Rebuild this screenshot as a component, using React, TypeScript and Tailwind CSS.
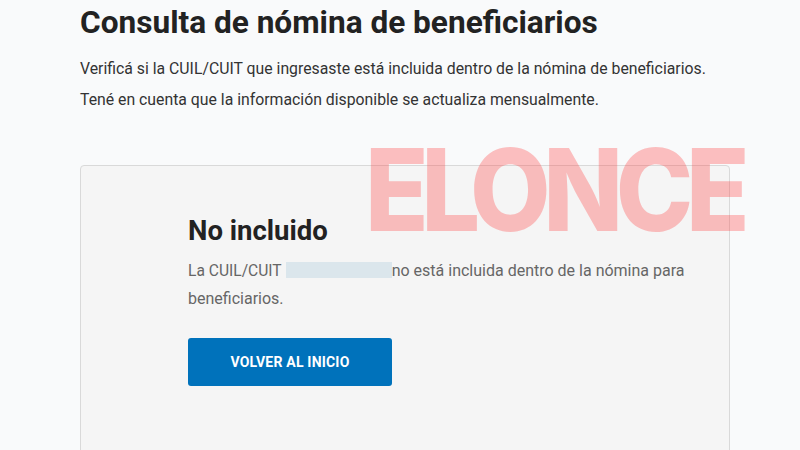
export default function App() {
	return (
		<div className="relative w-[800px] h-[450px] overflow-hidden bg-[#f9fafb] font-['Roboto',sans-serif]">
			<div className="pl-20 pt-[4px]">
				{/* Header */}
				<h1 className="text-[31.6px] leading-[38px] font-bold text-[#222]">
					Consulta de nómina de beneficiarios
				</h1>
				<p className="mt-[17px] text-[15.8px] leading-[20px] text-[#333]">
					Verificá si la CUIL/CUIT que ingresaste está incluida dentro de la nómina de beneficiarios.
				</p>
				<p className="mt-[11px] text-[15.8px] leading-[20px] text-[#333]">
					Tené en cuenta que la información disponible se actualiza mensualmente.
				</p>

				{/* Result card */}
				<div className="mt-[55px] w-[650px] h-[320px] rounded-t-[4px] border border-[#d9d9d9] bg-[#f5f5f5] pl-[107px] pt-[47px]">
					<h2 className="text-[27.5px] leading-[35px] font-bold text-[#222]">No incluido</h2>
					<p className="mt-[9px] w-[510px] text-[16px] leading-[27px] text-[#666]">
						<span className="text-[15.6px]">La CUIL/CUIT</span>
						<span className="inline-block ml-[4px] w-[106px] h-[16px] align-[-2px] bg-[#dbe6ec]" />
						<span>no está incluida dentro de la nómina para beneficiarios.</span>
					</p>
					<button className="mt-[26px] w-[204px] h-[48px] rounded-[3px] bg-[#0072bb] text-white text-[14px] font-bold tracking-[0.2px]">
						VOLVER AL INICIO
					</button>
				</div>
			</div>

			{/* Watermark */}
			<div className="absolute left-[365px] top-[133px] origin-left scale-x-[0.915] text-[114px] leading-[1] font-extrabold tracking-[-8px] text-[rgba(255,70,70,0.33)] font-['Inter',sans-serif] pointer-events-none">
				ELONCE
			</div>
		</div>
	);
}
